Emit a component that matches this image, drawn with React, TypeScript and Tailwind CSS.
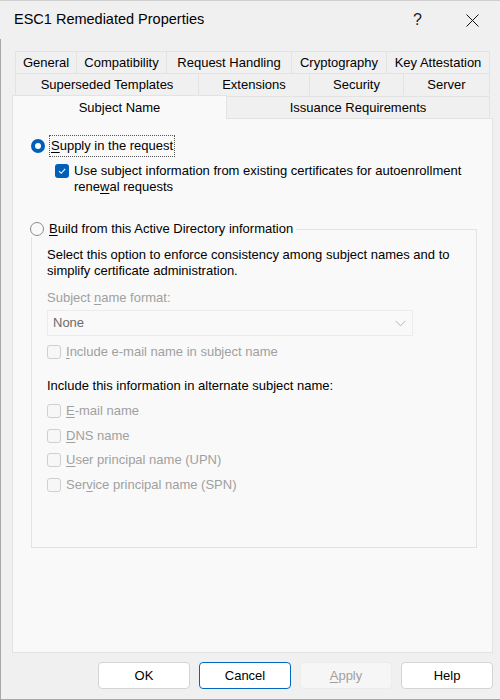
import { FC, ReactNode } from "react";

const Tab: FC<{ w: string; children: ReactNode }> = ({ w, children }) => (
  <div
    className={`${w} flex h-[22px] items-center justify-center border-r border-t border-[#e3e3e3] first:border-l bg-[#f0f0f0] text-[13px]`}
  >
    {children}
  </div>
);

const Check: FC<{ on?: boolean; disabled?: boolean }> = ({ on, disabled }) =>
  on ? (
    <span className="flex h-[14px] w-[14px] shrink-0 items-center justify-center rounded-[3px] bg-[#005fb8]">
      <svg width="10" height="10" viewBox="0 0 10 10">
        <path d="M2 5.2 L4.2 7.3 L8.2 2.8" fill="none" stroke="white" strokeWidth="1.1" />
      </svg>
    </span>
  ) : (
    <span
      className={`h-[14px] w-[14px] shrink-0 rounded-[3px] border ${
        disabled ? "border-[#cfcfcf] bg-[#f7f7f7]" : "border-[#8a8a8a] bg-white"
      }`}
    />
  );

const Radio: FC<{ on?: boolean }> = ({ on }) =>
  on ? (
    <span className="flex h-[14px] w-[14px] shrink-0 items-center justify-center rounded-full bg-[#005fb8]">
      <span className="h-[6px] w-[6px] rounded-full bg-white" />
    </span>
  ) : (
    <span className="h-[14px] w-[14px] shrink-0 rounded-full border border-[#8a8a8a] bg-[#f9f9f9]" />
  );

const DisabledOption: FC<{ children: ReactNode }> = ({ children }) => (
  <div className="flex h-[16px] items-center gap-[5px] text-[#a0a0a0]">
    <Check disabled />
    <span>{children}</span>
  </div>
);

const Button: FC<{ children: ReactNode; focused?: boolean; disabled?: boolean }> = ({
  children,
  focused,
  disabled,
}) => (
  <button
    className={`h-[27px] w-[92px] rounded-[4px] border text-[13px] ${
      focused
        ? "border-[#0067c0] bg-white text-black"
        : disabled
        ? "border-[#ececec] bg-[#f6f6f6] text-[#a0a0a0]"
        : "border-[#d4d4d4] bg-white text-black"
    }`}
  >
    {children}
  </button>
);

export default function App() {
  return (
    <div
      className="flex h-[700px] w-[500px] flex-col border-t border-[#cfcfcf] bg-[#f0f0f0] text-[13px] text-black"
      style={{ fontFamily: '"Liberation Sans", Arial, sans-serif' }}
    >
      {/* title bar */}
      <div className="flex h-[38px] items-center pl-[14px]">
        <span className="text-[14.5px]">ESC1 Remediated Properties</span>
        <span className="ml-auto mr-[44px] text-[16px] text-[#222]">?</span>
        <svg width="13" height="13" viewBox="0 0 13 13" className="mr-[21px]">
          <path d="M0.5 0.5 L12.5 12.5 M12.5 0.5 L0.5 12.5" stroke="#111" strokeWidth="1" />
        </svg>
      </div>

      <div className="flex flex-1 flex-col border-b border-l border-[#a8a8a8] pl-[11px] pr-[7px] pt-[12px]">
        {/* tab rows */}
        <div className="flex pl-[3px]">
          <Tab w="w-[62px]">General</Tab>
          <Tab w="w-[90px]">Compatibility</Tab>
          <Tab w="w-[125px]">Request Handling</Tab>
          <Tab w="w-[95px]">Cryptography</Tab>
          <Tab w="w-[103px]">Key Attestation</Tab>
        </div>
        <div className="flex pl-[3px]">
          <Tab w="w-[184px]">Superseded Templates</Tab>
          <Tab w="w-[111px]">Extensions</Tab>
          <Tab w="w-[94px]">Security</Tab>
          <Tab w="w-[86px]">Server</Tab>
        </div>
        <div className="flex items-end">
          <div className="z-10 -mb-px flex h-[24px] w-[215px] items-center justify-center border-l border-r border-t border-[#e3e3e3] bg-[#f9f9f9]">
            Subject Name
          </div>
          <div className="flex h-[22px] w-[263px] items-center justify-center border-r border-t border-[#e3e3e3]">
            Issuance Requirements
          </div>
        </div>

        {/* panel */}
        <div className="flex h-[535px] flex-col border border-[#e3e3e3] bg-[#f9f9f9] pl-[18px] pr-[15px] pt-[16px]">
          <div className="flex items-center gap-[4px]">
            <Radio on />
            <span className="border border-dotted border-[#555] px-px py-[2px] leading-[16px]">
              <u className="underline-offset-2">S</u>upply in the request
            </span>
          </div>
          <div className="mt-[6px] flex gap-[5px] pl-[24px] leading-[16px]">
            <div className="pt-[1px]">
              <Check on />
            </div>
            <span>
              Use subject information from existing certificates for autoenrollment
              <br />
              rene<u className="underline-offset-2">w</u>al requests
            </span>
          </div>

          <fieldset className="mt-[26px] h-[327px] border border-[#e3e3e3] pl-[15px] pr-[12px]">
            <legend className="-ml-[17px] flex items-center gap-[5px] bg-[#f9f9f9] pr-[3px] leading-[16px]">
              <Radio />
              <span>
                <u className="underline-offset-2">B</u>uild from this Active Directory information
              </span>
            </legend>
            <p className="mt-[10px] leading-[16px]">
              Select this option to enforce consistency among subject names and to simplify
              certificate administration.
            </p>
            <p className="mt-[11px] leading-[16px] text-[#a0a0a0]">
              Subject <u className="underline-offset-2">n</u>ame format:
            </p>
            <div className="mt-[4px] flex h-[26px] w-[366px] items-center justify-between border border-[#ececec] bg-[#f9f9f9] pl-[5px] pr-[6px] text-[#6a6a6a]">
              <span>None</span>
              <svg width="11" height="7" viewBox="0 0 11 7">
                <path d="M0.5 0.8 L5.5 5.8 L10.5 0.8" fill="none" stroke="#b5b5b5" strokeWidth="1" />
              </svg>
            </div>
            <div className="mt-[8px]">
              <DisabledOption>
                <u className="underline-offset-2">I</u>nclude e-mail name in subject name
              </DisabledOption>
            </div>
            <p className="mt-[18px] leading-[16px]">Include this information in alternate subject name:</p>
            <div className="mt-[9px] flex flex-col gap-[8.5px]">
              <DisabledOption>
                <u className="underline-offset-2">E</u>-mail name
              </DisabledOption>
              <DisabledOption>
                <u className="underline-offset-2">D</u>NS name
              </DisabledOption>
              <DisabledOption>
                <u className="underline-offset-2">U</u>ser principal name (UPN)
              </DisabledOption>
              <DisabledOption>
                Ser<u className="underline-offset-2">v</u>ice principal name (SPN)
              </DisabledOption>
            </div>
          </fieldset>
        </div>

        {/* buttons */}
        <div className="mt-[9px] flex justify-end gap-[9px]">
          <Button>OK</Button>
          <Button focused>Cancel</Button>
          <Button disabled>
            <u className="underline-offset-2">A</u>pply
          </Button>
          <Button>Help</Button>
        </div>
      </div>
    </div>
  );
}
